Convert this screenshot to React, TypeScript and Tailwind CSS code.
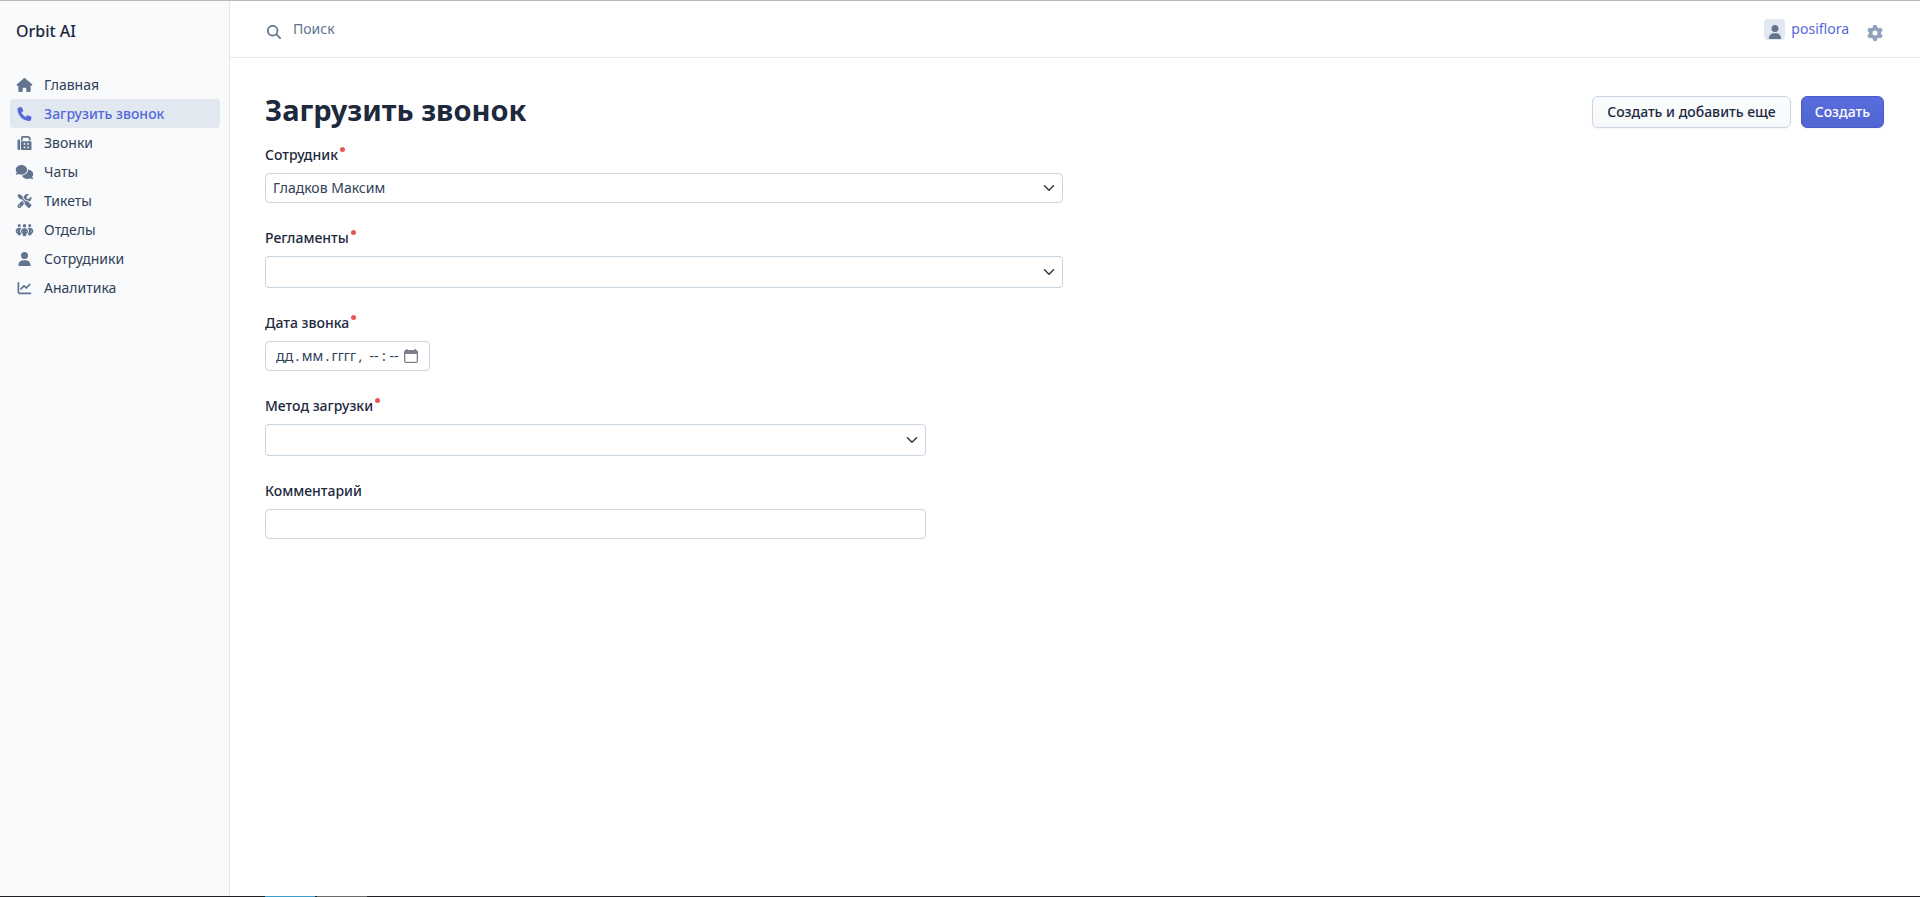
import type { ReactNode } from "react";
import type { IconType } from "react-icons";
import {
  FaHouse,
  FaPhone,
  FaFax,
  FaComments,
  FaScrewdriverWrench,
  FaPeopleGroup,
  FaUser,
  FaChartLine,
  FaMagnifyingGlass,
  FaGear,
} from "react-icons/fa6";

const menu: { label: string; icon: IconType; active?: boolean }[] = [
  { label: "Главная", icon: FaHouse },
  { label: "Загрузить звонок", icon: FaPhone, active: true },
  { label: "Звонки", icon: FaFax },
  { label: "Чаты", icon: FaComments },
  { label: "Тикеты", icon: FaScrewdriverWrench },
  { label: "Отделы", icon: FaPeopleGroup },
  { label: "Сотрудники", icon: FaUser },
  { label: "Аналитика", icon: FaChartLine },
];

function Sidebar() {
  return (
    <aside className="w-[230px] shrink-0 border-r border-slate-200 bg-slate-50 pr-[9px] pl-2.5">
      <a href="#" className="mt-[18px] block px-1.5 text-base leading-6 font-medium text-slate-800">
        Orbit AI
      </a>
      <nav className="mt-[27px]">
        <ul>
          {menu.map(({ label, icon: Icon, active }) => (
            <li key={label}>
              <a
                href="#"
                className={
                  active
                    ? "flex h-[29px] items-center gap-2.5 rounded bg-slate-200 px-[5px] font-medium text-[#5468d8]"
                    : "flex h-[29px] items-center gap-2.5 rounded px-[5px] text-slate-700"
                }
              >
                <Icon className={active ? "h-3.5 w-[19px]" : "h-3.5 w-[19px] text-slate-500"} />
                {label}
              </a>
            </li>
          ))}
        </ul>
      </nav>
    </aside>
  );
}

function TopBar() {
  return (
    <header className="flex h-[57px] items-center justify-between border-b border-slate-200 pr-[37px] pl-[37px]">
      <form className="flex grow items-center gap-3">
        <FaMagnifyingGlass className="mt-1.5 size-3.5 text-slate-500" />
        <input
          type="search"
          aria-label="Поиск"
          placeholder="Поиск"
          className="mb-0.5 h-8 grow bg-transparent leading-5 outline-none placeholder:text-slate-500"
        />
      </form>
      <div className="flex items-center gap-[18px]">
        <a href="#" className="flex items-center gap-1.5 text-[#5468d8]">
          <span className="flex size-[21px] items-end justify-center overflow-hidden rounded bg-slate-200 text-slate-500">
            <FaUser className="mb-px size-3.5" />
          </span>
          posiflora
        </a>
        <button type="button" aria-label="Настройки" className="mt-2 text-slate-400">
          <FaGear className="size-4" />
        </button>
      </div>
    </header>
  );
}

function Field({ id, label, required, children }: { id: string; label: string; required?: boolean; children: ReactNode }) {
  return (
    <div className="mb-6">
      <label htmlFor={id} className="mb-2 flex h-[21px] items-center font-medium text-slate-800">
        {label}
        {required && <span className="mb-2.5 ml-0.5 size-[5px] rounded-full bg-[#e85555]" />}
      </label>
      {children}
    </div>
  );
}

function Select({ id, options, className }: { id: string; options: string[]; className: string }) {
  return (
    <div className={`relative ${className}`}>
      <select id={id} className="size-full appearance-none rounded border border-slate-300 bg-white px-[7px] text-slate-700">
        {options.map((option) => (
          <option key={option}>{option}</option>
        ))}
      </select>
      <svg
        viewBox="0 0 16 16"
        className="pointer-events-none absolute inset-y-0 right-2 my-auto size-3 fill-none stroke-[#343a40] stroke-2"
        strokeLinecap="round"
        strokeLinejoin="round"
      >
        <path d="m2 5 6 6 6-6" />
      </svg>
    </div>
  );
}

function CallForm() {
  return (
    <form id="call-form" className="mt-3.5">
      <Field id="employee" label="Сотрудник" required>
        <Select id="employee" options={["Гладков Максим"]} className="h-[30px] max-w-[798px]" />
      </Field>
      <Field id="rules" label="Регламенты" required>
        <Select id="rules" options={[""]} className="h-8 max-w-[798px]" />
      </Field>
      <Field id="date" label="Дата звонка" required>
        <div className="flex h-[30px] w-[165px] items-center rounded border border-slate-300 bg-white pr-[11px] pl-2.5">
          <input
            id="date"
            type="text"
            placeholder="дд&thinsp;.&thinsp;мм&thinsp;.&thinsp;гггг&thinsp;,&nbsp;&nbsp;--&nbsp;:&nbsp;--"
            className="w-0 grow bg-transparent text-slate-700 outline-none placeholder:text-slate-700"
          />
          <button type="button" aria-label="Открыть календарь" className="text-[#7b828b]">
            <svg viewBox="0 0 14 14" className="size-3.5 fill-current">
              <path d="M2 0h1.5v1h7V0H12v1a2 2 0 0 1 2 2v9a2 2 0 0 1-2 2H2a2 2 0 0 1-2-2V3a2 2 0 0 1 2-2ZM1.3 5v7q0 .7.7.7h10q.7 0 .7-.7V5Z" fillRule="evenodd" />
            </svg>
          </button>
        </div>
      </Field>
      <Field id="method" label="Метод загрузки" required>
        <Select id="method" options={[""]} className="h-8 max-w-[661px]" />
      </Field>
      <Field id="comment" label="Комментарий">
        <input
          id="comment"
          type="text"
          className="block h-[30px] w-full max-w-[661px] rounded border border-slate-300 bg-white px-[7px] text-slate-700"
        />
      </Field>
    </form>
  );
}

export default function App() {
  return (
    <div className="flex min-h-screen flex-col border-t border-[#b9b9bb] bg-white font-['Noto_Sans',sans-serif] text-sm text-slate-700">
      <div className="flex grow">
        <Sidebar />
        <div className="min-w-0 grow">
          <TopBar />
          <main className="px-[35px] pt-8 pr-9">
            <div className="flex items-start justify-between">
              <h1 className="text-[29px] leading-10 font-bold text-slate-800">Загрузить звонок</h1>
              <div className="mt-1.5 flex gap-2.5">
                <button
                  type="submit"
                  form="call-form"
                  className="h-8 rounded-md border border-slate-300 bg-linear-to-b from-[#fafdff] to-[#f7f8fa] px-3.5 font-medium text-slate-800 shadow-xs"
                >
                  Создать и добавить еще
                </button>
                <button
                  type="submit"
                  form="call-form"
                  className="h-8 rounded-md border border-[#4a5cc6] bg-linear-to-b from-[#586cdc] to-[#5265d3] px-[13px] font-medium text-white shadow-xs"
                >
                  Создать
                </button>
              </div>
            </div>
            <CallForm />
          </main>
        </div>
      </div>
      <footer className="flex h-px gap-0.5 bg-[#202124] pl-[265px]">
        <span className="w-[50px] bg-[#3f9bc8]" />
        <span className="w-[50px] bg-[#6b6b6b]" />
      </footer>
    </div>
  );
}
